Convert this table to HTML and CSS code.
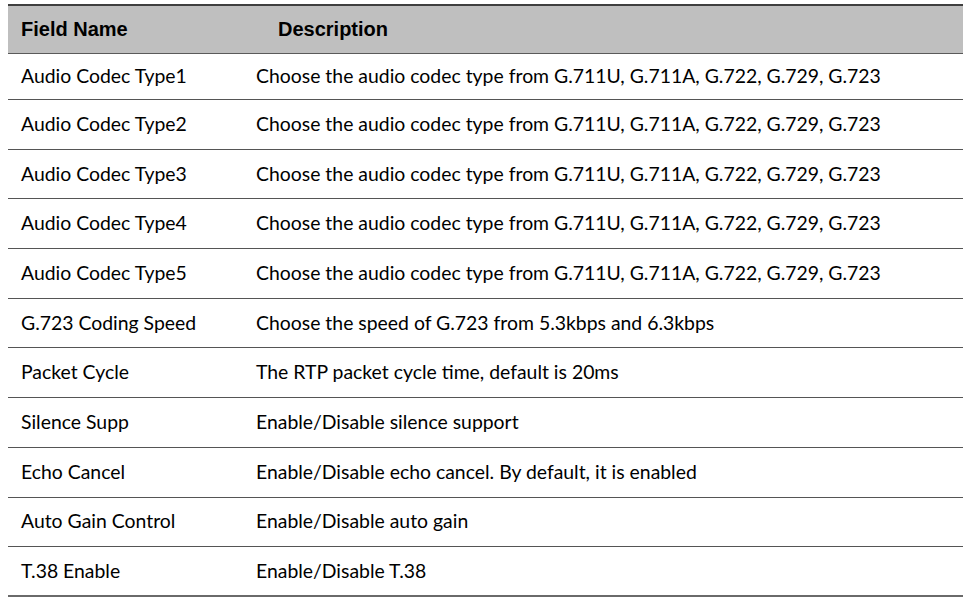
FILE: index.html
```html
<!DOCTYPE html>
<html>
<head>
<meta charset="utf-8">
<link rel="stylesheet" href="styles.css">
</head>
<body>
<table class="spec">
  <thead>
    <tr>
      <th class="col-name">Field Name</th>
      <th class="col-desc">Description</th>
    </tr>
  </thead>
  <tbody>
    <tr><td>Audio Codec Type1</td><td>Choose the audio codec type from G.711U, G.711A, G.722, G.729, G.723</td></tr>
    <tr><td>Audio Codec Type2</td><td>Choose the audio codec type from G.711U, G.711A, G.722, G.729, G.723</td></tr>
    <tr><td>Audio Codec Type3</td><td>Choose the audio codec type from G.711U, G.711A, G.722, G.729, G.723</td></tr>
    <tr><td>Audio Codec Type4</td><td>Choose the audio codec type from G.711U, G.711A, G.722, G.729, G.723</td></tr>
    <tr><td>Audio Codec Type5</td><td>Choose the audio codec type from G.711U, G.711A, G.722, G.729, G.723</td></tr>
    <tr><td>G.723 Coding Speed</td><td>Choose the speed of G.723 from 5.3kbps and 6.3kbps</td></tr>
    <tr><td>Packet Cycle</td><td>The RTP packet cycle time, default is 20ms</td></tr>
    <tr><td>Silence Supp</td><td>Enable/Disable silence support</td></tr>
    <tr><td>Echo Cancel</td><td>Enable/Disable echo cancel. By default, it is enabled</td></tr>
    <tr><td>Auto Gain Control</td><td>Enable/Disable auto gain</td></tr>
    <tr class="last"><td>T.38 Enable</td><td>Enable/Disable T.38</td></tr>
  </tbody>
</table>
</body>
</html>
```

FILE: styles.css
```css
html, body {
  margin: 0;
  padding: 0;
  background: #ffffff;
}

.spec {
  margin: 4px 0 0 8px;
  width: 955px;
  border-collapse: collapse;
  table-layout: fixed;
  font-family: "Lato", "Open Sans", sans-serif;
  font-size: 19.4px;
  line-height: 23px;
  color: #000;
}

.spec th {
  background: #bfbfbf;
  font-family: "Liberation Sans", Arial, sans-serif;
  font-weight: bold;
  font-size: 20px;
  text-align: left;
  height: 47px;
  padding: 0;
  border-top: 2px solid #3f3f3f;
  border-bottom: 1px solid #5a5a5a;
  vertical-align: middle;
}

.spec .col-name {
  width: 235px;
  padding-left: 13px;
  box-sizing: border-box;
}

.spec .col-desc {
  padding-left: 35px;
}

.spec td {
  box-sizing: border-box;
  height: 49.7px;
  padding: 0 0 2px 13px;
  border-bottom: 1px solid #555555;
  vertical-align: middle;
  white-space: nowrap;
}

.spec tbody tr:first-child td {
  height: 46px;
}

.spec tr.last td {
  border-bottom: 2px solid #6a6a6a;
}
```
